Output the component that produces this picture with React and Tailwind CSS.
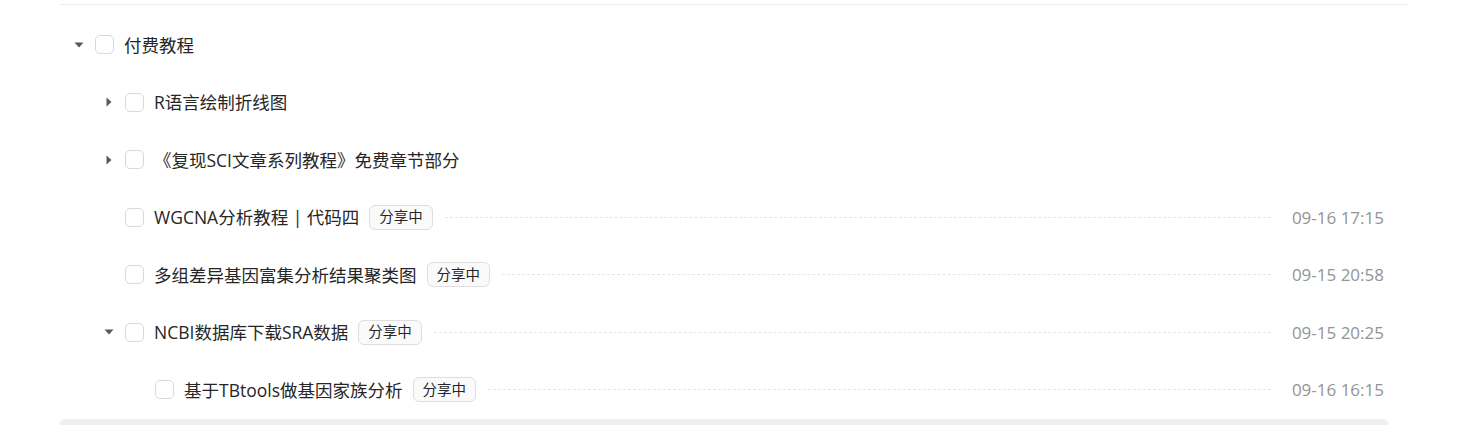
const rows = [
  { title: "付费教程", level: 0, caret: "down" },
  { title: "R语言绘制折线图", level: 1, caret: "right" },
  { title: "《复现SCI文章系列教程》免费章节部分", level: 1, caret: "right" },
  { title: "WGCNA分析教程 | 代码四", level: 1, shared: true, time: "09-16 17:15" },
  { title: "多组差异基因富集分析结果聚类图", level: 1, shared: true, time: "09-15 20:58" },
  { title: "NCBI数据库下载SRA数据", level: 1, caret: "down", shared: true, time: "09-15 20:25" },
  { title: "基于TBtools做基因家族分析", level: 2, shared: true, time: "09-16 16:15" },
];

const indent = ["pl-[10px]", "pl-[40px]", "pl-[70px]"];

function Caret({ dir }) {
  if (!dir) return null;
  return dir === "down" ? (
    <svg width="10" height="6" viewBox="0 0 10 6">
      <path d="M0.5 0.5h9L5 5.5z" fill="#595959" />
    </svg>
  ) : (
    <svg width="6" height="10" viewBox="0 0 6 10">
      <path d="M0.5 0.5v9L5.5 5z" fill="#595959" />
    </svg>
  );
}

function Row({ row }) {
  return (
    <div className={`flex h-[57.5px] items-center pr-[24px] ${indent[row.level]}`}>
      <div className="flex w-[18px] shrink-0 items-center justify-center">
        <Caret dir={row.caret} />
      </div>
      <div className="ml-[7px] h-[19px] w-[19px] shrink-0 rounded-[5px] border border-[#d9d9d9] bg-white" />
      <span className="ml-[10px] whitespace-nowrap text-[17.5px] text-[#262626]">{row.title}</span>
      {row.shared && (
        <span className="ml-[10px] flex h-[25px] items-center rounded-[6px] border border-[#dedede] bg-[#fafafa] px-[9px] text-[14.5px] text-[#262626]">
          分享中
        </span>
      )}
      {row.time && (
        <>
          <div className="ml-[12px] flex-1 border-t border-dashed border-[#e6e6e6]" />
          <span className="ml-[21px] whitespace-nowrap text-[17px] text-[#949494]">{row.time}</span>
        </>
      )}
    </div>
  );
}

export default function App() {
  return (
    <div
      className="h-[425px] w-[1474px] overflow-hidden bg-white pt-[4px]"
      style={{ fontFamily: '"Open Sans", "Noto Sans CJK SC", sans-serif' }}
    >
      <div className="ml-[60px] mr-[66px] border-t border-[#ebebeb] pt-[11px]">
        {rows.map((row, i) => (
          <Row key={i} row={row} />
        ))}
      </div>
      <div className="ml-[59px] mr-[85px] h-[20px] rounded-t-[6px] bg-[#f0f0f0]" />
    </div>
  );
}
